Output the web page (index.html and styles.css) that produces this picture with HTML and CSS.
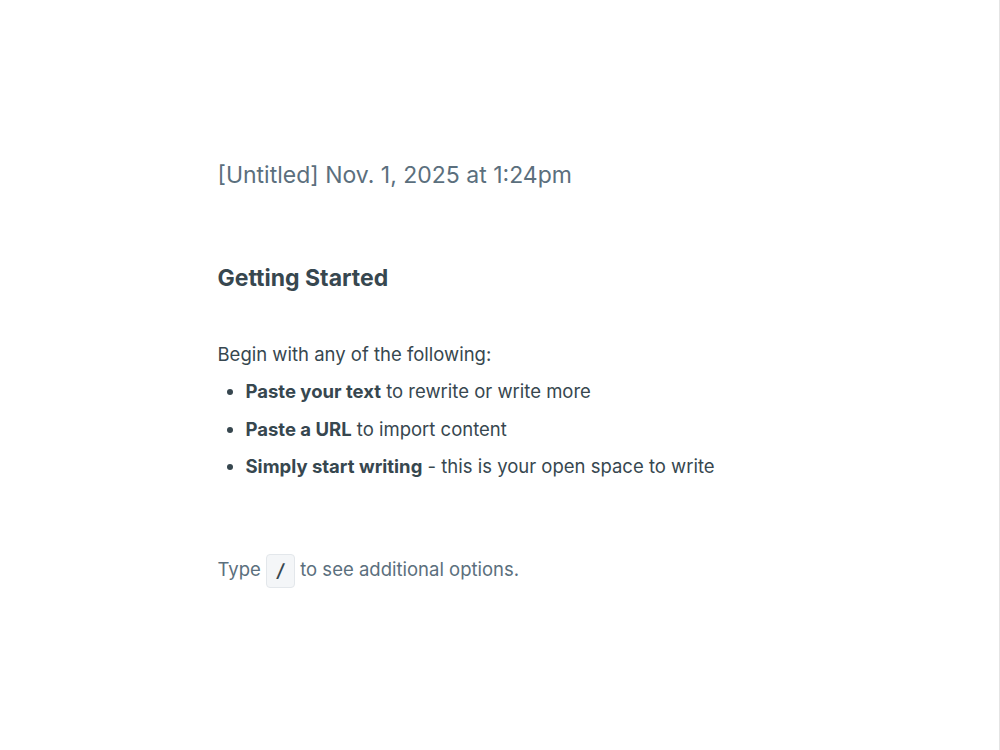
FILE: index.html
```html
<!DOCTYPE html>
<html lang="en">
<head>
    <meta charset="UTF-8">
    <meta name="viewport" content="width=device-width, initial-scale=1.0">
    <title>Untitled document</title>
    <link rel="stylesheet" href="styles.css">
</head>
<body>
    <div class="editor">
        <div class="doc">
            <!-- Document title -->
            <h1 class="doc-title">[Untitled] Nov. 1, 2025 at 1:24pm</h1>

            <!-- Placeholder content -->
            <h2 class="doc-heading">Getting Started</h2>
            <p class="doc-text">Begin with any of the following:</p>
            <ul class="doc-list">
                <li><strong>Paste your text</strong> to rewrite or write more</li>
                <li><strong>Paste a URL</strong> to import content</li>
                <li><strong>Simply start writing</strong> - this is your open space to write</li>
            </ul>

            <p class="doc-hint">Type <kbd class="key">/</kbd> to see additional options.</p>
        </div>
    </div>
</body>
</html>
```

FILE: styles.css
```css
/* Body Styling */
body {
    margin: 0;
    font-family: Inter, "Noto Sans", sans-serif;
    background-color: #ffffff;
    color: #37474f;
}

/* Editor Area */
.editor {
    height: 750px;
    border-right: 1px solid #e4e4e4;
    box-sizing: border-box;
}

.doc {
    width: 564px;
    margin: 0 auto;
    padding-top: 158px;
}

/* Title */
.doc-title {
    margin: 0;
    font-size: 23px;
    font-weight: 400;
    line-height: 34px;
    color: #5b6f7d;
}

/* Heading */
.doc-heading {
    margin: 69px 0 0;
    font-size: 23px;
    font-weight: 700;
    line-height: 34px;
    color: #37474f;
}

.doc-text {
    margin: 45px 0 0;
    font-size: 18.5px;
    line-height: 28px;
}

/* List */
.doc-list {
    margin: 9px 0 0;
    padding-left: 28px;
    font-size: 18.5px;
    line-height: 28px;
}

.doc-list li {
    margin-bottom: 9.5px;
}

.doc-list strong {
    font-weight: 700;
}

/* Hint line */
.doc-hint {
    margin: 72px 0 0;
    font-size: 18.5px;
    line-height: 34px;
    color: #5b6f7d;
}

.key {
    display: inline-block;
    width: 27px;
    height: 32px;
    border: 1px solid #e3e7eb;
    border-radius: 4px;
    background-color: #f4f6f8;
    font-family: Inter, sans-serif;
    font-size: 18px;
    font-weight: 600;
    font-style: italic;
    line-height: 32px;
    text-align: center;
    color: #37474f;
    vertical-align: middle;
}
```
